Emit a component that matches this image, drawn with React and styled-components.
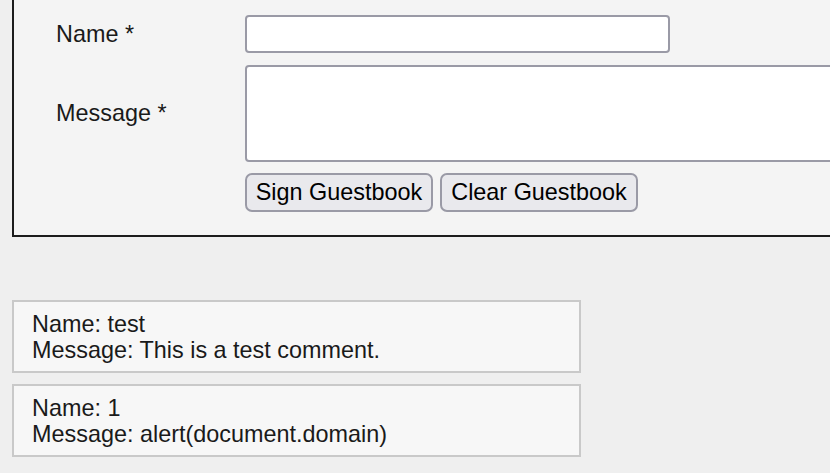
import styled, { createGlobalStyle } from "styled-components";

const GlobalStyle = createGlobalStyle`
    html, body {
        margin: 0;
        padding: 0;
        overflow: hidden;
        background-color: #efefef;
        font-family: "Liberation Sans", Arial, sans-serif;
        font-size: 23.4px;
        color: #1a1a1a;
    }
`;

const entries = [
    { name: "test", message: "This is a test comment." },
    { name: "1", message: "alert(document.domain)" },
];

export default function App() {
    return (
        <>
            <GlobalStyle />
            <Page>
                <FormBox>
                    <FormGrid>
                        <Label>Name *</Label>
                        <NameInput type="text" />
                        <Label>Message *</Label>
                        <MessageInput />
                        <span />
                        <Buttons>
                            <Button $width={188}>Sign Guestbook</Button>
                            <Button $width={198}>Clear Guestbook</Button>
                        </Buttons>
                    </FormGrid>
                </FormBox>
                <Comments>
                    {entries.map((e, i) =>
                        <Comment key={i}>
                            Name: {e.name}<br />
                            Message: {e.message}
                        </Comment>
                    )}
                </Comments>
            </Page>
        </>
    );
}

const Page = styled.div`
    padding-left: 12px;
`;

// the form panel runs off the top and right of the window
const FormBox = styled.div`
    width: 900px;
    background-color: #f4f4f4;
    border: 2px solid #1c1c1c;
    border-top: none;
    padding: 15px 0 23px 42px;
`;

const FormGrid = styled.div`
    display: grid;
    grid-template-columns: 189px 1fr;
    align-items: center;
    row-gap: 12px;
`;

const Label = styled.label`
    font-size: 23.4px;
    color: #1a1a1a;
`;

const NameInput = styled.input`
    box-sizing: border-box;
    width: 425px;
    height: 38px;
    background-color: #ffffff;
    border: 2px solid #9a9aa6;
    border-radius: 4px;
    font-size: 23px;
    font-family: inherit;
    outline: none;
`;

const MessageInput = styled.textarea`
    box-sizing: border-box;
    width: 640px;
    height: 97px;
    background-color: #ffffff;
    border: 2px solid #9a9aa6;
    border-radius: 4px;
    resize: none;
    font-size: 23px;
    font-family: inherit;
    outline: none;
    display: block;
`;

const Buttons = styled.div`
    display: flex;
    gap: 7px;
    margin-top: -1px;
`;

const Button = styled.button`
    box-sizing: border-box;
    width: ${(p) => p.$width}px;
    height: 39px;
    padding: 0;
    font-family: "Liberation Sans", Arial, sans-serif;
    font-size: 23.4px;
    color: #000000;
    background-color: #e9e9ed;
    border: 2px solid #9a9aa6;
    border-radius: 7px;
`;

const Comments = styled.div`
    display: flex;
    flex-direction: column;
    gap: 11px;
    margin-top: 63px;
`;

const Comment = styled.div`
    box-sizing: border-box;
    width: 569px;
    height: 73px;
    padding: 9px 0 0 18px;
    background-color: #f7f7f7;
    border: 2px solid #c9c9c9;
    font-size: 23.4px;
    line-height: 26px;
    color: #1a1a1a;
`;
